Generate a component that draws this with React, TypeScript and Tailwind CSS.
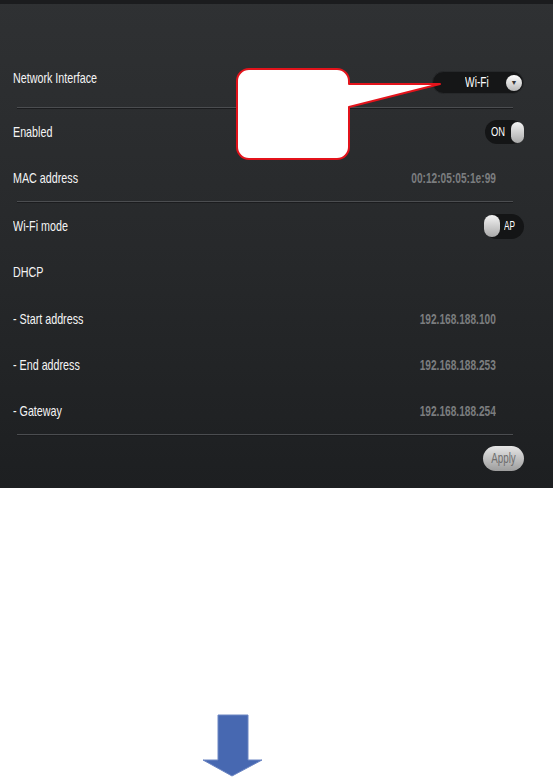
const font = { fontFamily: '"Liberation Sans", Arial, sans-serif' };

const Divider = () => (
  <div className="mx-[17px] mr-[40px] h-[2px] border-t border-[#4b4d50] bg-[#1b1c1e]" />
);

const Row = ({ label, children, h = "h-[46px]" }: { label: string; children?: React.ReactNode; h?: string }) => (
  <div className={`flex ${h} items-center justify-between pl-[13px] pr-[29px]`}>
    <span className="inline-block origin-left scale-x-[0.74] whitespace-nowrap pt-[2px] text-[14.5px] text-[#f5f5f5]">{label}</span>
    {children}
  </div>
);

const Value = ({ text }: { text: string }) => (
  <span className="mr-[28px] inline-block origin-right scale-x-[0.7] whitespace-nowrap pt-[2px] text-[14.5px] font-bold text-[#7b7d7f]">
    {text}
  </span>
);

const Callout = () => (
  <svg className="absolute left-[230px] top-[60px]" width="220" height="106" viewBox="0 0 220 106">
    <path
      d="M19 9 H107 A12 12 0 0 1 119 21 V24 L210 24 L119 47 V87 A12 12 0 0 1 107 99 H19 A12 12 0 0 1 7 87 V21 A12 12 0 0 1 19 9 Z"
      fill="#ffffff"
      stroke="#e3131b"
      strokeWidth="2"
      strokeLinejoin="round"
    />
  </svg>
);

export default function App() {
  return (
    <div className="min-h-[777px] w-[553px] bg-white" style={font}>
      <div className="relative h-[488px] bg-[linear-gradient(180deg,#2f3133_0%,#27292b_50%,#1d1f21_100%)]">
        <div className="h-[4px] bg-[#1b1c1e]" />
        <div className="h-[51px]" />

        <Row label="Network Interface">
          <div className="mt-[9px] flex h-[23px] w-[92px] items-center rounded-full border border-[#26282a] bg-[#151617] pr-[1px]">
            <span className="flex flex-1 justify-center pl-[14px]">
              <span className="inline-block scale-x-[0.7] text-[14.5px] text-white">Wi-Fi</span>
            </span>
            <span className="flex h-[16px] w-[16px] items-center justify-center rounded-full bg-[linear-gradient(180deg,#ffffff,#b8b8b8)]">
              <span className="text-[7px] leading-none text-[#333]">▼</span>
            </span>
          </div>
        </Row>
        <div className="mt-[6px]" />
        <Divider />

        <Row label="Enabled">
          <div className="flex h-[24px] w-[39px] items-center rounded-full bg-[#141516] pl-[6px]">
            <span className="inline-block origin-left scale-x-[0.72] text-[13px] text-white">ON</span>
            <span className="ml-auto h-[21px] w-[17px] rounded-full bg-[linear-gradient(180deg,#f4f4f4,#a9a9a9)]" />
          </div>
        </Row>

        <Row label="MAC address">
          <Value text="00:12:05:05:1e:99" />
        </Row>
        <Divider />

        <Row label="Wi-Fi mode">
          <div className="flex h-[25px] w-[40px] items-center rounded-full bg-[#141516]">
            <span className="h-[22px] w-[16px] rounded-full bg-[linear-gradient(180deg,#f4f4f4,#a9a9a9)]" />
            <span className="ml-[4px] inline-block origin-left scale-x-[0.66] text-[12.5px] text-white">AP</span>
          </div>
        </Row>

        <Row label="DHCP" />
        <Row label="- Start address" h="h-[47px]">
          <Value text="192.168.188.100" />
        </Row>
        <Row label="- End address">
          <Value text="192.168.188.253" />
        </Row>
        <Row label="- Gateway">
          <Value text="192.168.188.254" />
        </Row>
        <Divider />

        <div className="flex justify-end pr-[29px] pt-[10px]">
          <button className="flex h-[25px] w-[41px] items-center justify-center rounded-full bg-[linear-gradient(180deg,#e6e6e6,#9d9d9d)]">
            <span className="inline-block scale-x-[0.7] text-[14px] text-[#6e6e6e]">Apply</span>
          </button>
        </div>

        <Callout />
      </div>

      <div className="h-[289px] pl-[202px] pt-[226px]">
        <svg width="62" height="63" viewBox="0 0 62 63">
          <polygon
            points="16,1 46,1 46,46 60,46 30,62 1,46 16,46"
            fill="#4768b1"
            stroke="#6c86c3"
            strokeWidth="1"
          />
        </svg>
      </div>
    </div>
  );
}
